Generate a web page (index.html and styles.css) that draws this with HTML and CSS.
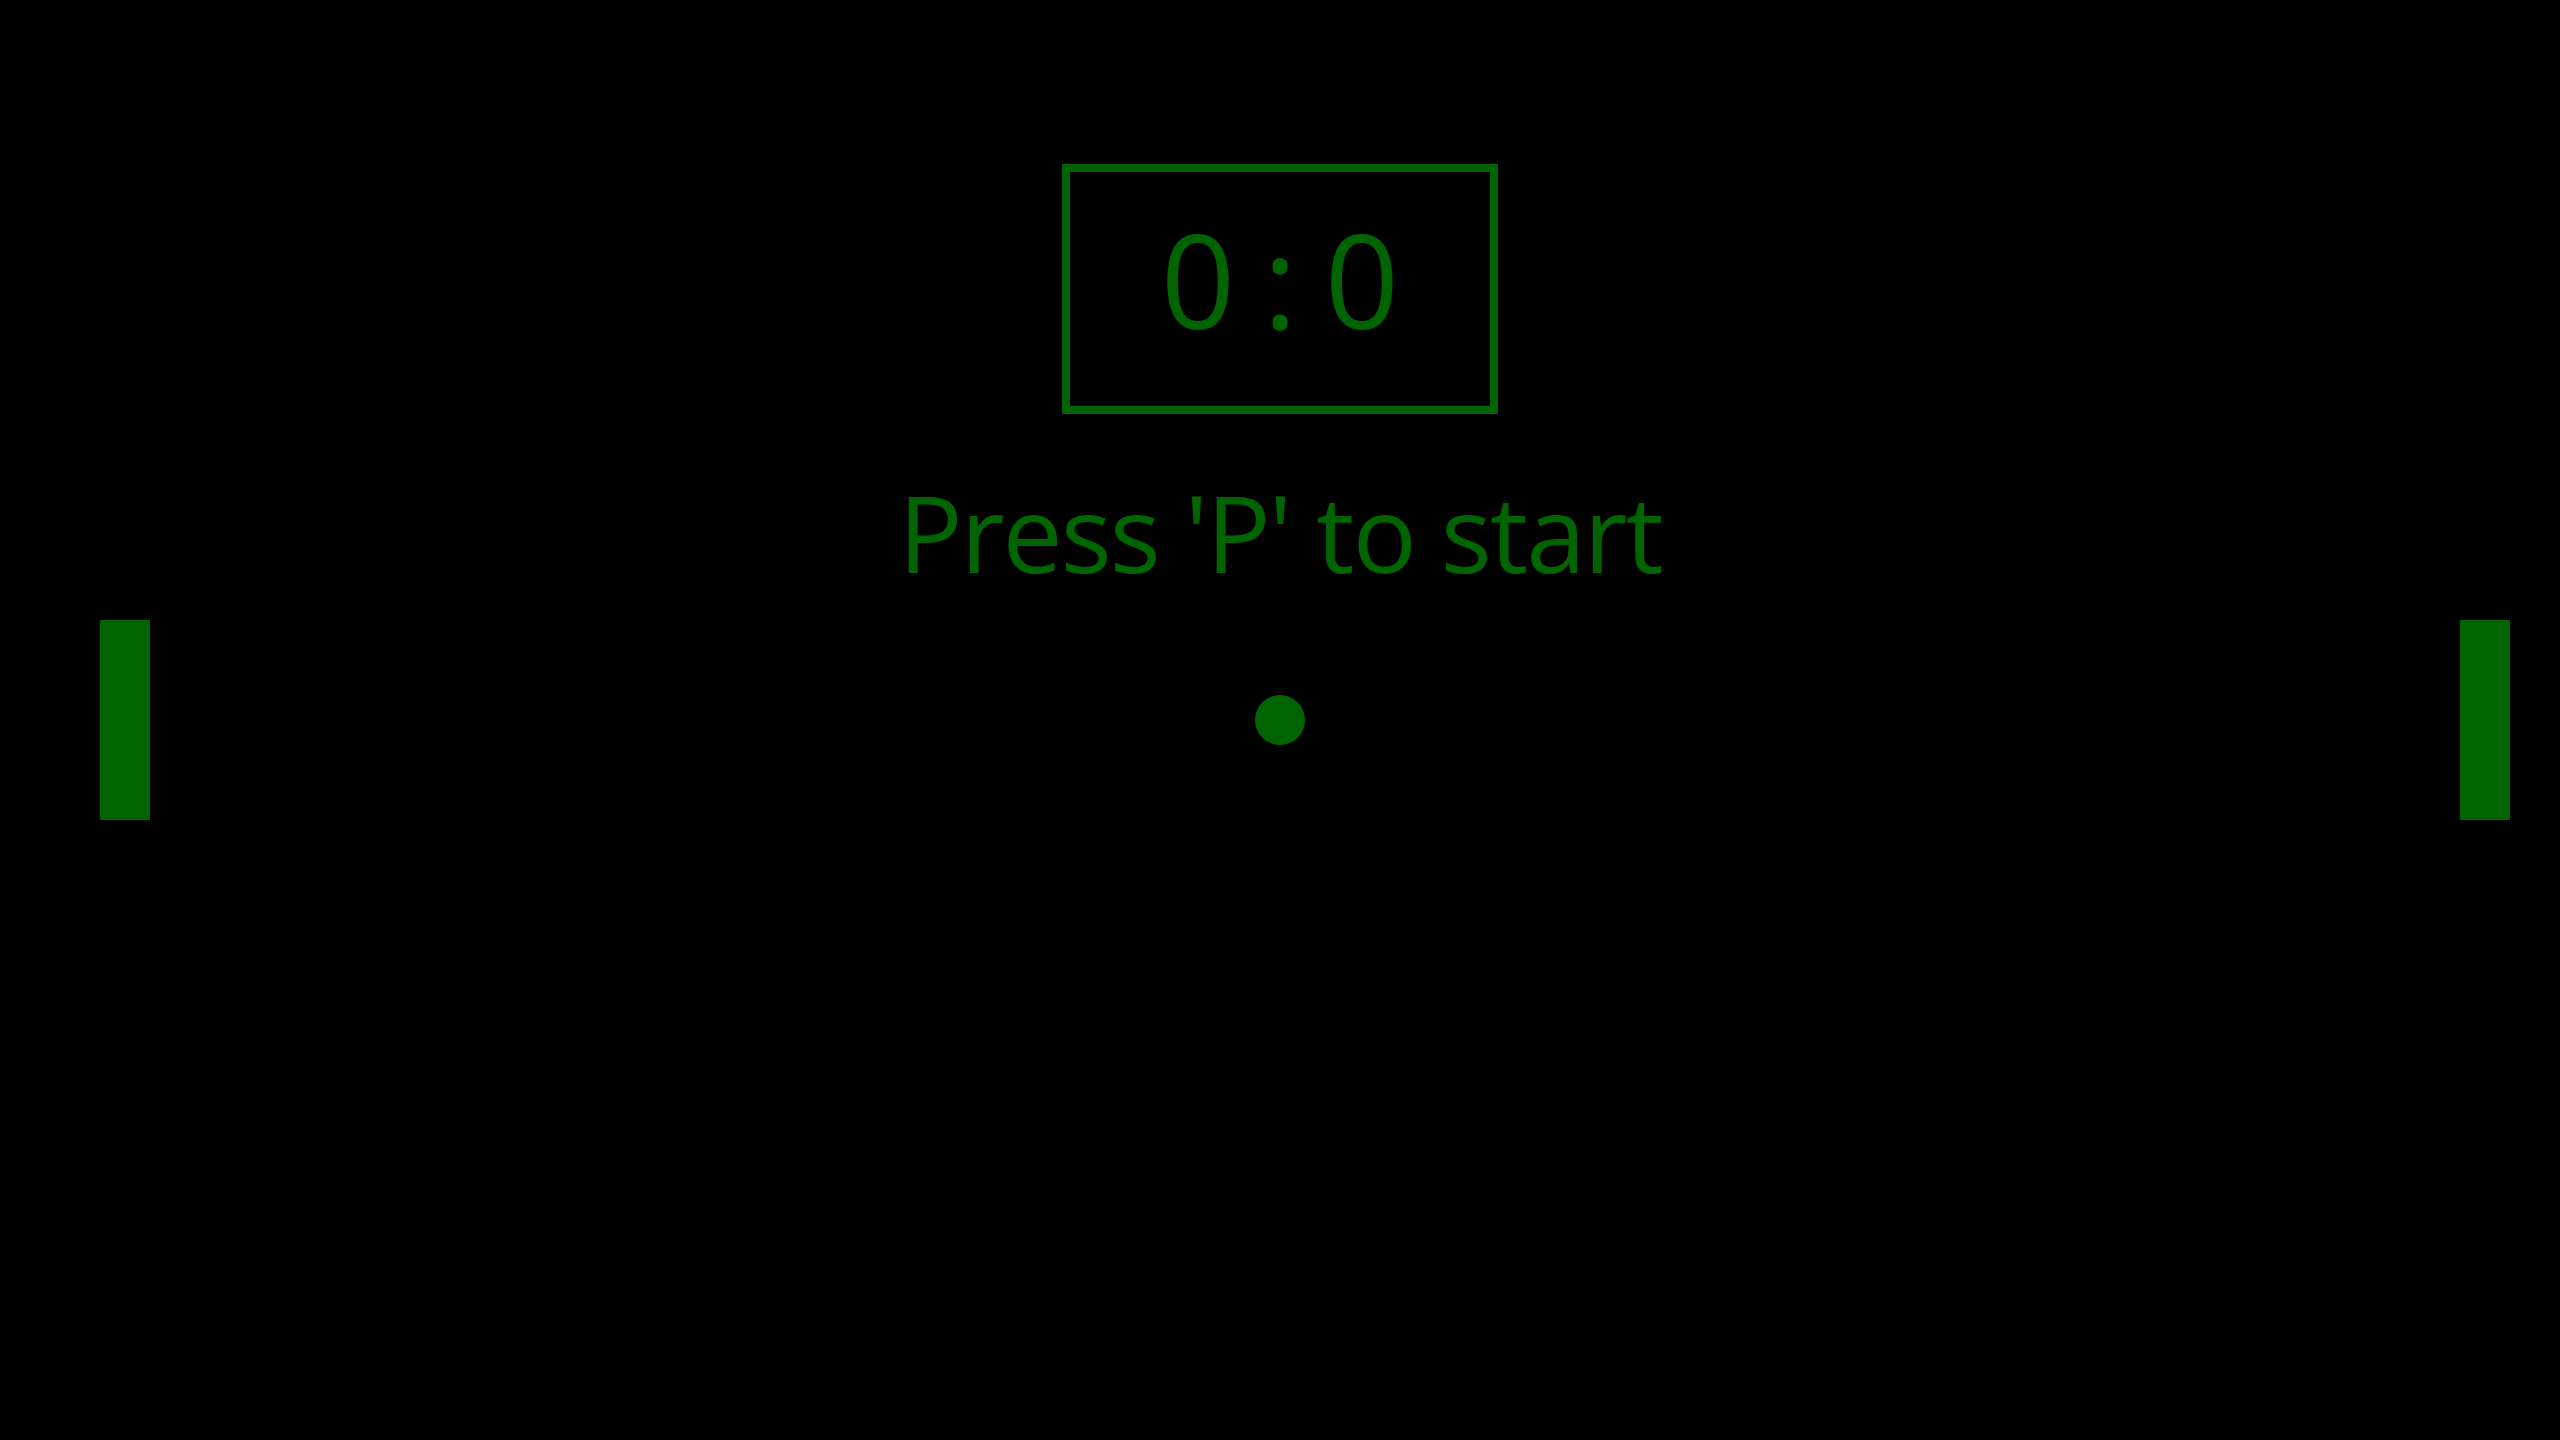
FILE: index.html
```html
<!DOCTYPE html>
<html>
<head>
<meta charset="utf-8">
<link rel="stylesheet" href="styles.css">
</head>
<body>
<div class="field">
  <div class="score">0 : 0</div>
  <div class="message">Press 'P' to start</div>
  <div class="paddle paddle-left"></div>
  <div class="paddle paddle-right"></div>
  <div class="ball"></div>
</div>
</body>
</html>
```
FILE: styles.css
```css
html, body {
  margin: 0;
  padding: 0;
  background: #000;
}
.field {
  position: relative;
  width: 2560px;
  height: 1440px;
  display: flex;
  flex-direction: column;
  align-items: center;
  font-family: "Open Sans", "Noto Sans", sans-serif;
  color: #006400;
}
.score {
  margin-top: 164px;
  box-sizing: border-box;
  width: 436px;
  height: 250px;
  border: 8px solid #006400;
  display: flex;
  align-items: center;
  justify-content: center;
  font-size: 130px;
  line-height: 1;
  padding-bottom: 21px;
  word-spacing: -6px;
  white-space: pre;
}
.message {
  margin-top: 64px;
  font-size: 107px;
  line-height: 1;
  letter-spacing: -1.9px;
}
.paddle {
  position: absolute;
  top: 620px;
  width: 50px;
  height: 200px;
  background: #006400;
}
.paddle-left { left: 100px; }
.paddle-right { left: 2460px; }
.ball {
  position: absolute;
  left: 1255px;
  top: 695px;
  width: 50px;
  height: 50px;
  border-radius: 50%;
  background: #006400;
}
```
